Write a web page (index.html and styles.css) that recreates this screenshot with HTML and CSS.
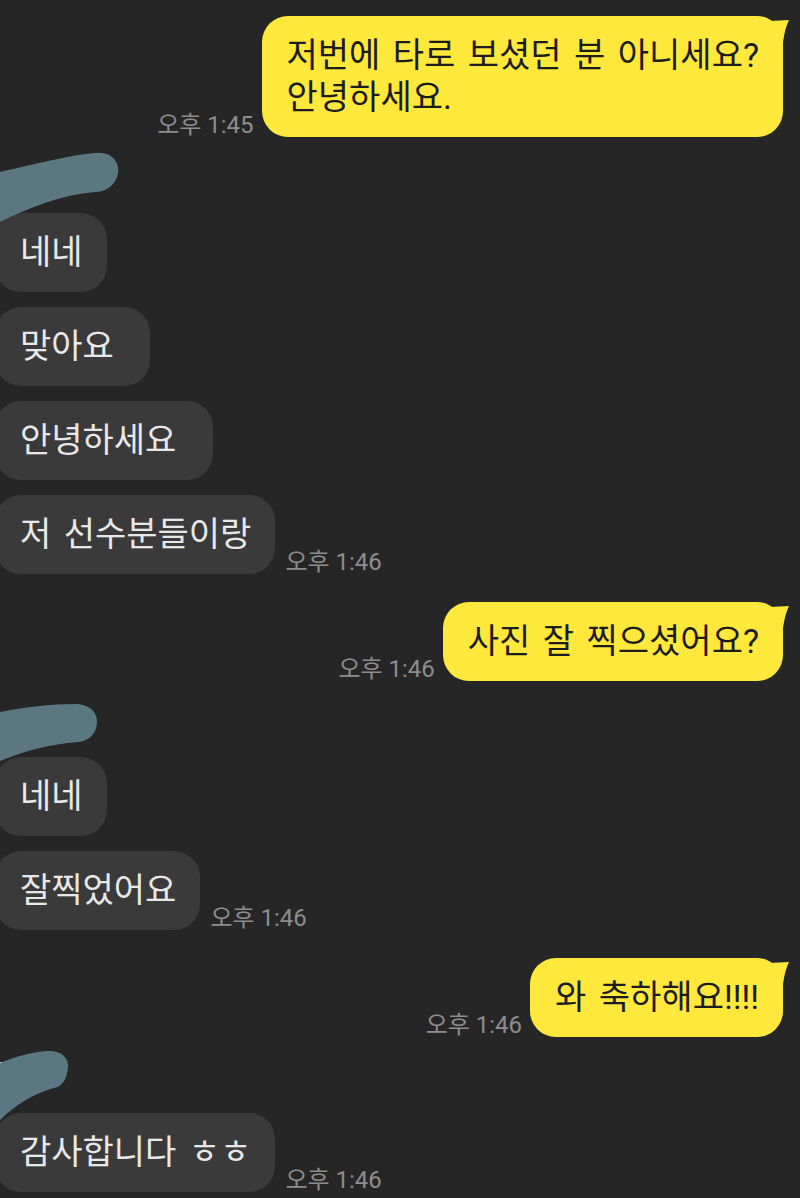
FILE: index.html
```html
<!DOCTYPE html>
<html lang="ko">
<head>
    <meta charset="UTF-8">
    <meta name="viewport" content="width=device-width, initial-scale=1.0">
    <title>채팅</title>
    <link rel="stylesheet" href="styles.css">
</head>
<body>

<div class="chat">

    <div class="group out">
        <div class="row">
            <span class="time">오후 1:45</span>
            <div class="bubble">저번에 타로 보셨던 분 아니세요?<br>안녕하세요.</div>
        </div>
    </div>

    <div class="group in">
        <div class="sender">
            <svg width="130" height="90" viewBox="0 0 130 90">
                <rect x="0" y="30" width="9" height="2" fill="#cfd6d8"/>
                <path d="M0 27 C 40 18, 70 10, 95 8 C 112 6, 120 18, 118 28 C 116 40, 106 47, 95 47 C 62 50, 30 62, 0 77 Z" fill="#5b7782"/>
            </svg>
        </div>
        <div class="row"><div class="bubble">네네</div></div>
        <div class="row"><div class="bubble">맞아요&nbsp;</div></div>
        <div class="row"><div class="bubble">안녕하세요&nbsp;</div></div>
        <div class="row">
            <div class="bubble">저 선수분들이랑</div>
            <span class="time">오후 1:46</span>
        </div>
    </div>

    <div class="group out">
        <div class="row">
            <span class="time">오후 1:46</span>
            <div class="bubble">사진 잘 찍으셨어요?</div>
        </div>
    </div>

    <div class="group in">
        <div class="sender">
            <svg width="130" height="90" viewBox="0 0 130 90">
                <rect x="0" y="24" width="3" height="16" fill="#cfd6d8"/>
                <path d="M0 23 C 25 18, 50 15, 75 15 C 90 15, 98 24, 97 34 C 96 46, 88 52, 78 53 C 50 55, 25 62, 0 72 Z" fill="#5b7782"/>
            </svg>
        </div>
        <div class="row"><div class="bubble">네네</div></div>
        <div class="row">
            <div class="bubble">잘찍었어요</div>
            <span class="time">오후 1:46</span>
        </div>
    </div>

    <div class="group out">
        <div class="row">
            <span class="time">오후 1:46</span>
            <div class="bubble">와 축하해요!!!!</div>
        </div>
    </div>

    <div class="group in">
        <div class="sender">
            <svg width="130" height="90" viewBox="0 0 130 90">
                <rect x="0" y="17" width="4" height="16" fill="#cfd6d8"/>
                <rect x="32" y="45" width="11" height="2" fill="#cfd6d8"/>
                <path d="M0 18 C 15 12, 30 7, 48 6 C 62 5, 69 14, 68 22 C 67 34, 62 42, 54 43 C 35 48, 15 60, 0 75 Z" fill="#5b7782"/>
            </svg>
        </div>
        <div class="row">
            <div class="bubble">감사합니다 ㅎㅎ</div>
            <span class="time">오후 1:46</span>
        </div>
    </div>

</div>

</body>
</html>
```

FILE: styles.css
```css
body {
    margin: 0;
    padding: 0;
    background-color: #262626;
    font-family: Roboto, "Noto Sans CJK KR", sans-serif;
    width: 800px;
    height: 1198px;
    overflow: hidden;
}
.chat {
    display: flex;
    flex-direction: column;
    gap: 28px;
    padding: 16px 17px 0 0;
}
.group {
    display: flex;
    flex-direction: column;
    gap: 15px;
}
.row {
    display: flex;
    align-items: flex-end;
    gap: 10px;
}
.out .row {
    justify-content: flex-end;
    gap: 8px;
}
.bubble {
    font-size: 34px;
    line-height: 42px;
    word-spacing: 4px;
    padding: 18px 24px 19px 25px;
    border-radius: 26px;
    white-space: nowrap;
}
.in .bubble {
    margin-left: -5px;
    background-color: #3a3a3a;
    color: #e8e8e8;
}
.out .bubble {
    position: relative;
    background-color: #fee83b;
    color: #1c1c1c;
}
.out .bubble::after {
    content: "";
    position: absolute;
    top: 0;
    right: -7px;
    width: 32px;
    height: 28px;
    background-color: #fee83b;
    clip-path: path('M12 5 L31 4 Q27 12 25 26 L12 26 Z');
}
.time {
    font-size: 24px;
    line-height: 24px;
    color: #8d8d8d;
    white-space: nowrap;
}
.sender {
    position: relative;
    height: 33px;
}
.sender svg {
    position: absolute;
    left: 0;
    top: -20px;
}
```
